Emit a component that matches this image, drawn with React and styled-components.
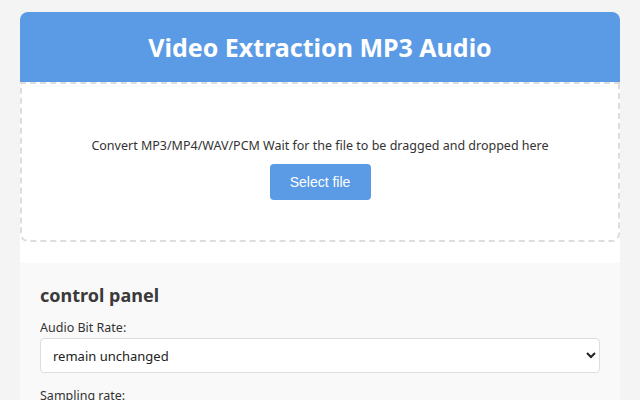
import React from 'react';
import styled, { createGlobalStyle } from 'styled-components';

const GlobalStyle = createGlobalStyle`
  html, body {
    margin: 0;
    padding: 0;
    background: #f4f4f4;
    font-family: "Noto Sans", "Open Sans", sans-serif;
    color: #333;
  }
  * { box-sizing: border-box; }
`;

const Page = styled.div`
  padding: 12px 20px 20px;
`;

const Card = styled.div`
  background: #fff;
  border-radius: 8px;
  overflow: hidden;
`;

const Header = styled.header`
  background: #5b9be6;
  height: 70px;
  display: flex;
  align-items: center;
  justify-content: center;
  h1 {
    margin: 0;
    color: #fff;
    font-size: 25px;
    font-weight: 700;
  }
`;

const DropZone = styled.div`
  height: 160px;
  border: 2px dashed #ddd;
  border-radius: 0 0 8px 8px;
  display: flex;
  flex-direction: column;
  align-items: center;
  justify-content: center;
  gap: 10px;
  padding-top: 13px;
  p {
    margin: 0;
    font-size: 12.5px;
    color: #333;
  }
`;

const Button = styled.button`
  width: 101px;
  height: 36px;
  background: #5b9be6;
  color: #fff;
  border: none;
  border-radius: 4px;
  font-family: "Liberation Sans", Arial, sans-serif;
  font-size: 14px;
  cursor: pointer;
`;

const Panel = styled.section`
  margin-top: 21px;
  background: #f9f9f9;
  padding: 20px 20px 20px;
  h2 {
    margin: 0 0 12px;
    font-size: 18px;
    font-weight: 700;
    color: #3a3a3a;
  }
`;

const Field = styled.div`
  margin-bottom: 14px;
  label {
    display: block;
    font-size: 12.5px;
    color: #333;
    margin-bottom: 2px;
  }
`;

const Select = styled.select`
  width: 100%;
  height: 35px;
  border: 1px solid #ddd;
  border-radius: 4px;
  background: #fff;
  padding: 0 8px;
  font-family: "Noto Sans", sans-serif;
  font-size: 13px;
  color: #222;
`;

export default function App() {
  return (
    <Page>
      <GlobalStyle />
      <Card>
        <Header>
          <h1>Video Extraction MP3 Audio</h1>
        </Header>
        <DropZone>
          <p>Convert MP3/MP4/WAV/PCM Wait for the file to be dragged and dropped here</p>
          <Button>Select file</Button>
        </DropZone>
        <Panel>
          <h2>control panel</h2>
          <Field>
            <label>Audio Bit Rate:</label>
            <Select defaultValue="same">
              <option value="same">remain unchanged</option>
            </Select>
          </Field>
          <Field>
            <label>Sampling rate:</label>
            <Select defaultValue="same">
              <option value="same">remain unchanged</option>
            </Select>
          </Field>
        </Panel>
      </Card>
    </Page>
  );
}
